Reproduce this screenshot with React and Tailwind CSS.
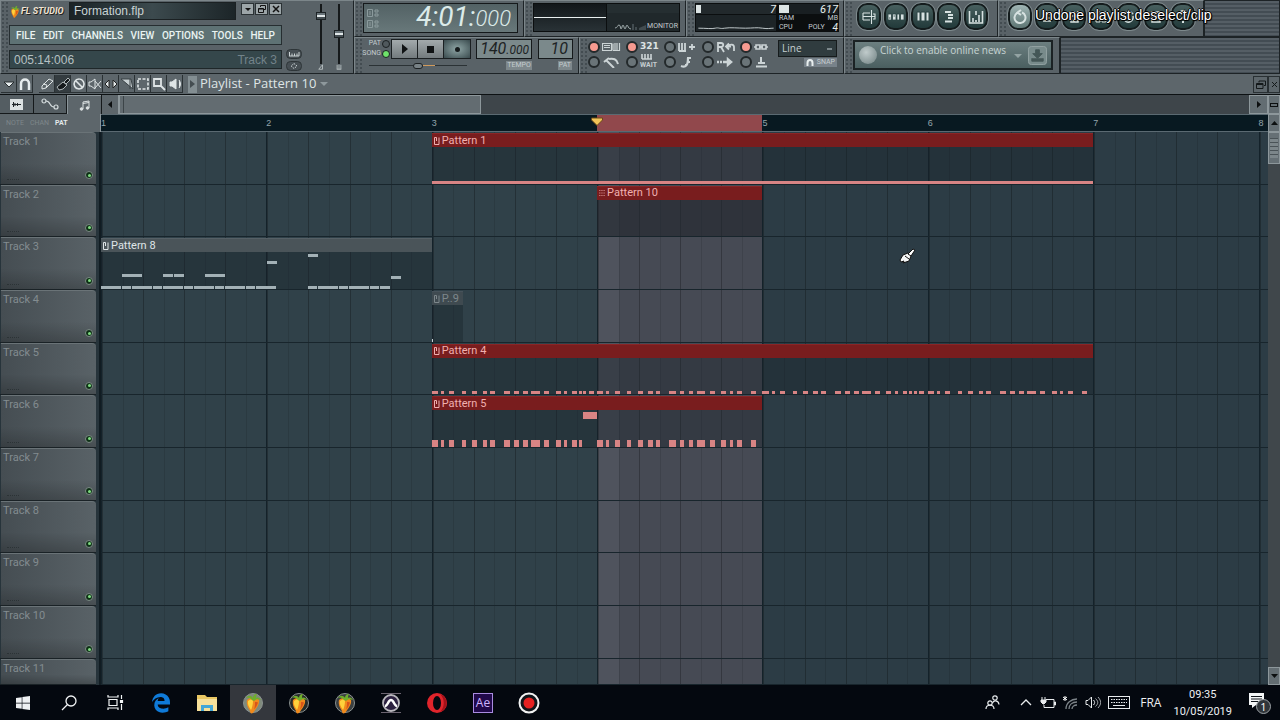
import React from "react";
import { FaEdgeLegacy, FaWindows } from "react-icons/fa";

// one bar of the timeline is 496 ticks, about 7 bars fit in the window
const BAR_TICKS = 496;
const BAR_WIDTH = 14.17;

const hits = [
  [0, 19], [28, 9], [53, 15], [91, 12], [122, 15], [153, 14], [176, 14], [217, 19],
  [248, 14], [275, 14], [299, 26], [338, 15], [372, 15], [398, 9], [421, 14],
];

function shift(list, bar) {
  return list.map(([start, length]) => ({ start: start + bar * BAR_TICKS, length }));
}

function steps(from, to) {
  const list = [];
  for (let start = from; start < to; start += 31) {
    list.push({ start, length: 29 });
  }
  return list;
}

const pattern4 = [
  ...shift([...hits, [441, 9], [455, 9], [471, 15]], 0),
  ...shift([...hits, [463, 14]], 1),
  ...shift([...hits, [441, 9], [455, 9], [471, 15]], 2),
  ...shift([...hits, [463, 14]], 3),
];

const pattern5 = [
  ...shift([...hits, [441, 10]], 0),
  ...shift([...hits, [463, 14]], 1),
];

const pattern8High = [
  { start: 63, length: 30, top: 58 },
  { start: 94, length: 30, top: 58 },
  { start: 187, length: 30, top: 58 },
  { start: 218, length: 30, top: 58 },
  { start: 311, length: 30, top: 58 },
  { start: 342, length: 30, top: 58 },
  { start: 497, length: 30, top: 24 },
  { start: 620, length: 30, top: 4 },
  { start: 869, length: 30, top: 64 },
];

const tracks = [
  { name: "Track 1", clips: [{ name: "Pattern 1", bar: 2, bars: 4, color: "red", notes: [{ start: 0, length: 1984 }] }] },
  { name: "Track 2", clips: [{ name: "Pattern 10", bar: 3, bars: 1, color: "red", steps: true, notes: [] }] },
  { name: "Track 3", clips: [{ name: "Pattern 8", bar: 0, bars: 2, color: "gray", notes: [...steps(0, 527), ...steps(620, 868), ...pattern8High] }] },
  { name: "Track 4", clips: [{ name: "P..9", bar: 2, bars: 0.19, color: "dim", notes: [{ start: 0, length: 3 }] }] },
  { name: "Track 5", clips: [{ name: "Pattern 4", bar: 2, bars: 4, color: "red", notes: pattern4 }] },
  { name: "Track 6", clips: [{ name: "Pattern 5", bar: 2, bars: 2, color: "red", tall: true, notes: [...pattern5, { start: 454, length: 42, top: 4 }] }] },
  { name: "Track 7", clips: [] },
  { name: "Track 8", clips: [] },
  { name: "Track 9", clips: [] },
  { name: "Track 10", clips: [] },
  { name: "Track 11", clips: [] },
];

const headColors = {
  red: "bg-[#791d1e] text-[#f0b0b0] border-t border-[#8a2526]",
  gray: "bg-[#4a5459] text-[#dfe5e7] border-t border-[#566066]",
  dim: "bg-[#3f4a50] text-[#7d878b] border-t border-[#46525a]",
};

const noteColors = {
  red: "bg-[#d88484]",
  gray: "bg-[#a3b1b6]",
  dim: "bg-[#c3ced2]",
};

function Clip({ clip }) {
  const total = clip.bars * BAR_TICKS;
  return (
    <div
      className="absolute inset-y-0 flex flex-col overflow-hidden pt-px"
      style={{ left: `${clip.bar * BAR_WIDTH}%`, width: `${clip.bars * BAR_WIDTH}%` }}
    >
      <div className={`flex h-[14px] shrink-0 items-center gap-[2px] pl-[2px] font-['Roboto'] text-[11px] leading-[12px] whitespace-nowrap ${headColors[clip.color]}`}>
        <svg className="h-2 w-[6px] shrink-0" viewBox="0 0 6 8" fill="none" stroke="currentColor">
          {clip.steps ? (
            <path d="M0 1.5h6M0 4h6M0 6.5h6" strokeDasharray="1.5 .7" opacity=".6" />
          ) : (
            <path d="M2.5 .5h-2v7h4.500V.5M2.500 .5v3.500" />
          )}
        </svg>
        <span>{clip.name}</span>
      </div>
      <div className={`relative flex-1 ${clip.steps ? "bg-[#1f252c]/60" : "bg-[#18222a]/40"}`}>
        {clip.notes.map((note, i) => (
          <div
            key={i}
            className={`absolute ${noteColors[clip.color]} ${clip.tall ? "h-[7px]" : "h-[3px]"} ${note.top === undefined ? "bottom-0" : ""}`}
            style={{
              left: `${(note.start / total) * 100}%`,
              width: `${(note.length / total) * 100}%`,
              top: note.top === undefined ? undefined : `${note.top}%`,
            }}
          />
        ))}
      </div>
    </div>
  );
}

function GridLines() {
  return (
    <div className="absolute inset-0 flex overflow-hidden">
      {[0, 1, 2, 3, 4, 5, 6, 7].map((bar) => (
        <div
          key={bar}
          className={`grid shrink-0 basis-[14.17%] grid-cols-8 border-l border-[#14222a] ${bar === 3 ? "bg-[#464a54]" : bar < 4 ? "bg-[#304149]" : "bg-[#2c3c45]"}`}
        >
          {[0, 1, 2, 3, 4, 5, 6, 7].map((step) => (
            <div
              key={step}
              className={`border-l ${step % 2 ? "border-black/10" : "border-black/25"} ${bar === 3 && step === 0 ? "bg-white/5" : ""}`}
            />
          ))}
        </div>
      ))}
    </div>
  );
}

function Grip() {
  return (
    <div className="w-2 shrink-0 self-stretch bg-[radial-gradient(#3a4347_35%,transparent_40%)] bg-[size:4px_4px] opacity-70" />
  );
}

const panel = "border border-t-[#7c868a] border-l-[#7c868a] border-r-[#1d2326] border-b-[#1d2326] bg-[#596267]";
const stripes = "bg-[repeating-linear-gradient(#555e65_0px,#555e65_2px,#434c53_2px,#434c53_4px)]";

function Fruit({ className, tone }) {
  return (
    <svg className={className} viewBox="0 0 20 22" aria-hidden="true">
      {tone && <circle cx="10" cy="11" r="9.500" fill={tone} stroke="#8b9190" strokeWidth="1" />}
      <path d="M4 8c3-3 9-3 12 0 1 4-3 9-6 13-2 1-3 0-3-2-2-3-4-7-3-11z" fill="#f08a1c" />
      <path d="M5 9c2-2 4-2 5 0 0 3-1 7-2 9-2-3-4-6-3-9z" fill="#ffd23c" />
      <path d="M9 8C7 5 4 5 3 6c2-3 5-3 7 0 0-3 2-4 4-4-1 2-1 3-1 4 2-1 4 0 5 2-3-1-5-1-7 1z" fill="#6fae2c" />
      <path d="M12 10c1 0 2 0 3 .5-1 3-2 5-4 7 1-3 1-5 1-7.500z" fill="#d9541a" />
    </svg>
  );
}

function WindowButton({ label, children }) {
  return (
    <button aria-label={label} className="flex h-3 w-[13px] items-center justify-center border border-[#2b3235] bg-[#9ca5a8] text-[#111]">
      <svg className="h-2 w-2" viewBox="0 0 8 8" fill="none" stroke="currentColor">{children}</svg>
    </button>
  );
}

function MainPanel() {
  return (
    <section className={`flex w-[354px] shrink-0 ${panel}`}>
      <Grip />
      <div className="flex w-[273px] flex-col gap-[5px] pt-px">
        <div className="flex h-[18px] items-center">
          <div className="flex w-[60px] shrink-0 items-center">
            <Fruit className="h-[17px] w-3 shrink-0" />
            <span className="font-['Roboto'] text-[9px] leading-4 font-bold whitespace-nowrap text-[#efe2d2] italic [text-shadow:1px_1px_0_#222]">FL STUDIO</span>
          </div>
          <div className="flex h-[18px] flex-1 items-center border border-[#1b2123] bg-gradient-to-r from-[#1a2326] via-[#3c4a4e] to-[#1c2528] pl-1 font-['Liberation_Sans'] text-[12px] text-[#c9d3d4]">Formation.flp</div>
          <div className="flex w-[46px] items-center justify-end gap-px self-start pt-px">
            <WindowButton label="Minimize"><path d="M1 3h6L4 6z" fill="currentColor" stroke="none" /></WindowButton>
            <WindowButton label="Restore"><path d="M2.500 2V.5h5v4H6M.5 3.500h5v4h-5zM.5 4h5" /></WindowButton>
            <WindowButton label="Close"><path d="M1 1l6 6M7 1L1 7" strokeWidth="1.500" /></WindowButton>
          </div>
        </div>
        <nav className="flex h-5 items-center justify-between border border-[#262e31] bg-[#5e7274] px-[6px] font-['Roboto'] text-[10px] font-medium text-[#eaf4f2]">
          {["FILE", "EDIT", "CHANNELS", "VIEW", "OPTIONS", "TOOLS", "HELP"].map((item) => (
            <button key={item}>{item}</button>
          ))}
        </nav>
        <div className="flex h-[19px] items-center justify-between border border-[#1f2729] bg-[#35474b] px-1 font-['Liberation_Sans'] text-[12px] text-[#b5c1c2]">
          <span>005:14:006</span>
          <span className="text-[#73838a]">Track 3</span>
        </div>
      </div>
      <div className="flex w-6 flex-col items-center justify-end gap-[2px] pb-[2px] text-[#c9d1d3]">
        <svg className="h-[10px] w-4" viewBox="0 0 16 10"><rect x=".5" y=".5" width="15" height="9" rx="4" fill="#464e53" stroke="#2e3538" /><path d="M3.500 3v4M6 4.500V7M8.500 4.500V7M11 4.500V7M13 3v4M3 7h10" stroke="currentColor" fill="none" /></svg>
        <svg className="h-[10px] w-4" viewBox="0 0 16 10"><rect x=".5" y=".5" width="15" height="9" rx="4" fill="#464e53" stroke="#2e3538" /><path d="M8 2.500l3 2.500-3 2.500L5 5z" stroke="currentColor" strokeDasharray="1.500 1" fill="none" /></svg>
      </div>
      <div className="flex flex-1 justify-center gap-[2px] pt-[3px]">
        <VolumeSlider label="Main volume" value={85} icon="M6 1v6H1z" />
        <VolumeSlider label="Main pitch" value={50} icon="M1.500 1v6M4 1v6M6.500 1v6M1 7h6" />
      </div>
    </section>
  );
}

function VolumeSlider({ label, value, icon }) {
  return (
    <div className="flex w-4 flex-col items-center">
      <input
        type="range"
        aria-label={label}
        defaultValue={value}
        className="h-[60px] w-4 appearance-none bg-[linear-gradient(90deg,transparent_7px,#15191b_7px,#15191b_9px,transparent_9px)] [direction:rtl] [writing-mode:vertical-lr] [&::-webkit-slider-thumb]:h-2 [&::-webkit-slider-thumb]:w-[10px] [&::-webkit-slider-thumb]:appearance-none [&::-webkit-slider-thumb]:border [&::-webkit-slider-thumb]:border-[#1c2225] [&::-webkit-slider-thumb]:bg-[linear-gradient(#69747a_2px,#dfe6e8_2px,#dfe6e8_4px,#444d52_4px)]"
      />
      <svg className="h-[6px] w-2" viewBox="0 0 8 8" fill="none" stroke="#c8d0d2"><path d={icon} /></svg>
    </div>
  );
}

const pixelLabel = "font-['Roboto'] text-[7px] leading-[9px] text-[#c4cccf]";

function TimePanel() {
  return (
    <section className={`flex w-[170px] ${panel}`}>
      <Grip />
      <div className="mt-[2px] mr-[5px] flex h-[30px] flex-1 items-center border border-[#15191b] bg-gradient-to-b from-[#536265] to-[#68787a] pl-[3px]">
        <svg className="h-5 w-3" viewBox="0 0 12 20" fill="none" stroke="#8b9a9c">
          <path d="M.5 1.500h5v7h-5zM2 4h2M2 6h2M8 2h3v2H8zM8 6h3v2H8zM.5 12.500h5v7h-5zM3 14v4M8 13h3v2H8zM8 17h3v2H8z" />
        </svg>
        <div className="flex flex-1 items-baseline justify-end pr-[6px] font-['Roboto'] text-[#dcebe9] italic">
          <span className="text-[28px] leading-7">4:01:</span>
          <span className="text-[22px] leading-7 font-light">000</span>
        </div>
      </div>
    </section>
  );
}

function MonitorPanel() {
  return (
    <section className={`flex w-[162px] ${panel}`}>
      <Grip />
      <div className="mt-[2px] mr-[5px] grid h-[29px] flex-1 grid-cols-2 border border-[#0b0e0f] bg-[#1f272a]">
        <div className="flex items-center border-r border-[#0b0e0f] bg-gradient-to-b from-[#12171a] to-[#293236]">
          <div className="h-px flex-1 bg-[#eaf0f0]" />
        </div>
        <div className="flex items-end justify-end border-t-[9px] border-[#252e31] bg-[#20282b]">
          <svg className="mb-px h-[6px] w-4" viewBox="0 0 16 6" fill="none" stroke="#9da8aa"><path d="M0 4c3 0 2-3 4-3s1 4 2 4 1-4 2-4 1 4 2 4 1-4 2-4 1 4 4 4" /></svg>
          <svg className="mb-px h-[6px] w-4" viewBox="0 0 16 6" fill="#424c50"><path d="M1 0h2v6H1zM4 3h2v3H4zM8 6V4l7-3v5z" /></svg>
          <span className={`${pixelLabel} pr-px`}>MONITOR</span>
        </div>
      </div>
    </section>
  );
}

function CpuPanel() {
  return (
    <section className={`flex flex-1 ${panel}`}>
      <Grip />
      <div className="mt-[2px] mr-1 flex h-[29px] flex-1 gap-[3px] border border-[#0b0e0f] bg-[#0b0e0f] font-['Roboto'] text-[11px] leading-[11px] text-[#e6eeee]">
        <div className="flex w-20 flex-col gap-px">
          <div className="flex h-[10px] items-center justify-between bg-[#22292c]">
            <div className="h-2 w-[5px] bg-[#dce4e4]" />
            <span className="italic">7</span>
          </div>
          <svg className="w-20 flex-1 bg-[#1d2427]" viewBox="0 0 80 17" fill="none" stroke="#c8d0d2"><path d="M0 14c8 0 14 1 18 0s4 1 10 0 14 0 22 0 12-1 18 0 8 0 12 0" /></svg>
        </div>
        <div className="flex flex-1 flex-col">
          <div className="flex h-[10px] items-center justify-between bg-[#191f22]">
            <div className="h-2 w-[10px] bg-[#dce4e4]" />
            <span className="italic">617</span>
          </div>
          <div className={`flex justify-between ${pixelLabel}`}><span>RAM</span><span>MB</span></div>
          <div className={`flex items-center justify-between ${pixelLabel}`}>
            <span>CPU</span>
            <span className="pl-2">POLY</span>
            <span className="text-[10px] text-[#e6eeee] italic">4</span>
          </div>
        </div>
      </div>
    </section>
  );
}

function TransportPanel() {
  return (
    <section className={`flex w-[226px] ${panel}`}>
      <Grip />
      <div className="flex flex-1 flex-col gap-[2px] pt-px">
        <div className="flex items-start">
          <div className="flex w-[27px] flex-col gap-px">
            <label className={`flex items-center justify-end gap-px ${pixelLabel}`}>PAT
              <input type="radio" name="mode" className="size-2 appearance-none rounded-full border border-[#1b2022] bg-[#50595d] checked:bg-[#6fe36a]" />
            </label>
            <label className={`flex items-center justify-end gap-px ${pixelLabel}`}>SONG
              <input type="radio" name="mode" defaultChecked className="size-2 shrink-0 appearance-none rounded-full border border-[#1b2022] bg-[#50595d] checked:bg-[#6fe36a]" />
            </label>
          </div>
          <div className="ml-px flex h-5 border border-[#1b2022]">
            <button aria-label="Play" className="flex w-[26px] items-center justify-center border-r border-[#1b2022] bg-gradient-to-b from-[#a3aaac] to-[#737b7e]">
              <svg className="h-[10px] w-2" viewBox="0 0 8 10"><path d="M1 0l6 5-6 5z" fill="#101314" /></svg>
            </button>
            <button aria-label="Stop" className="flex w-[26px] items-center justify-center border-r border-[#1b2022] bg-gradient-to-b from-[#a3aaac] to-[#737b7e]">
              <span className="size-[7px] bg-[#101314]" />
            </button>
            <button aria-label="Record" className="flex w-[26px] items-center justify-center bg-[radial-gradient(#8fa6a6,#394a4d)]">
              <span className="size-[5px] rounded-full bg-[#151b1c]" />
            </button>
          </div>
          <div className="ml-[5px] flex h-5 w-[56px] items-baseline justify-end border border-[#15191b] bg-[#7b898b] pr-[2px] font-['Roboto'] text-[#1d2324] italic">
            <span className="text-[16px] leading-[18px]">140</span><span className="text-[12px] leading-[18px]">.000</span>
          </div>
          <div className="ml-[6px] flex h-5 w-[35px] items-center justify-end border border-[#15191b] bg-[#7b898b] pr-1 font-['Roboto'] text-[16px] leading-[18px] text-[#1d2324] italic">10</div>
        </div>
        <div className="flex items-center">
          <input
            type="range"
            aria-label="Song position"
            defaultValue={50}
            className="ml-[6px] h-2 w-[98px] appearance-none bg-[linear-gradient(transparent_3px,#2b3235_3px,#2b3235_4px,transparent_4px)] [&::-webkit-slider-thumb]:h-[6px] [&::-webkit-slider-thumb]:w-[10px] [&::-webkit-slider-thumb]:appearance-none [&::-webkit-slider-thumb]:rounded-sm [&::-webkit-slider-thumb]:border [&::-webkit-slider-thumb]:border-[#1b2022] [&::-webkit-slider-thumb]:bg-[#788286]"
          />
          <span className="-ml-11 h-px w-3 bg-[#d09a5c]" />
          <span className={`ml-auto bg-[#7e888c] px-px ${pixelLabel}`}>TEMPO</span>
          <span className={`mr-[6px] ml-[26px] bg-[#7e888c] px-px ${pixelLabel}`}>PAT</span>
        </div>
      </div>
    </section>
  );
}

const options = [
  { label: "Typing keyboard", on: true, icon: <path d="M.5 2.500h9v7h-9zM2 4.500h6M2 6.500h6M11 2.500v7M13 2v8M15 2v8M17.500 2v8M11 9.500h7" strokeWidth="1.200" /> },
  { label: "Countdown", on: true, text: "321" },
  { label: "Blend recording", icon: <path d="M1 2v8M4 2v8M7 2v8M1 10h7M11 6h6M14 3v6" strokeWidth="1.800" /> },
  { label: "Loop recording", icon: <path d="M2 11V2h3c3 0 3 4 0 4H2M5 6l3 5M18 10V6c0-3-4-3-6-1M10 5.500h5M13 8.500L10 5.500 13 2.500" strokeWidth="1.800" /> },
  { label: "Step editing", on: true, icon: <path d="M0 6h2M2 4h4v4H2zM5 6h4M8 4h4v4H8zM12 6h2" strokeWidth="1.600" /> },
  { label: "Metronome", icon: <path d="M4 4l8 8M2 6l5-4M7 3c4-1 8 0 9 5" strokeWidth="2" /> },
  { label: "Wait for input", icon: <path d="M2 0v5M5 0v5M8 0v5M11 0v5M2 5h10" strokeWidth="1.600" />, small: "WAIT" },
  { label: "Multilink", icon: <path d="M3 10c5 2 7-1 7-8M9 2h4M12 6h-2M9 9H7" strokeWidth="2.200" /> },
  { label: "Auto scroll", icon: <path d="M1 6h2M4 6h2M7 6h5M12 3.500l3 2.500-3 2.500z" strokeWidth="2.500" /> },
  { label: "Note group", icon: <path d="M7 1v7M4 7h7M2 10.500h11" strokeWidth="2" /> },
];

function OptionsPanel() {
  return (
    <section className={`flex flex-1 ${panel}`}>
      <Grip />
      <div className="grid w-[190px] grid-cols-5 content-start pt-px">
        {options.map((option) => (
          <label key={option.label} className="flex h-[15px] items-center gap-[2px]">
            <input
              type="checkbox"
              aria-label={option.label}
              defaultChecked={option.on}
              className="size-3 shrink-0 appearance-none rounded-full border-2 border-[#23292b] bg-[#6a7478] checked:bg-[#f79a90]"
            />
            {option.text ? (
              <span className="font-['DejaVu_Sans'] text-[9px] font-bold text-[#dde3e4]">{option.text}</span>
            ) : (
              <span className="flex flex-col items-start">
                <svg className={option.small ? "h-[7px] w-5" : "h-3 w-5"} viewBox={option.small ? "0 0 20 7" : "0 0 20 12"} fill="none" stroke="#ccd4d6">{option.icon}</svg>
                {option.small && <span className={`${pixelLabel} leading-[7px] font-bold`}>{option.small}</span>}
              </span>
            )}
          </label>
        ))}
      </div>
      <div className="flex flex-1 flex-col items-end gap-px pt-[2px] pr-[6px]">
        <select aria-label="Snap" className="h-[17px] w-[59px] appearance-none border border-[#161b1c] bg-[#303c3f] bg-[linear-gradient(#7a868a,#7a868a)] bg-[size:5px_2px] bg-[position:right_4px_center] bg-no-repeat pl-[3px] font-['Open_Sans'] text-[10px] leading-[15px] text-[#c6d0d1]">
          <option>Line</option>
        </select>
        <span className={`flex items-center gap-[3px] bg-[#78828a] px-[2px] ${pixelLabel}`}>
          <svg className="h-[7px] w-2" viewBox="0 0 8 7" fill="none" stroke="#e8eeee" strokeWidth="2"><path d="M1.500 7V4c0-4 5-4 5 0v3" /></svg>
          SNAP
        </span>
      </div>
    </section>
  );
}

const windowIcons = [
  ["Playlist", <path d="M2 4h7M2 7.500h12M2 11h7M2 4v7M10.500 1v14M12 5h2v5h-2" strokeWidth="1.100" />],
  ["Step sequencer", <path d="M0 5h3.500v6H0zM4.500 5H8v6H4.500zM9 5h2.500v6H9zM12.500 5H16v6h-3.500zM1 9h1.500M5.500 7H7" fill="#d7e2e1" stroke="#2c4444" strokeWidth=".8" />],
  ["Piano roll", <path d="M2 3h3v9H2zM6 3h4v9H6zM11 3h3v9h-3zM5.500 3v5M10.500 3v5" fill="#d7e2e1" stroke="#2c4444" />],
  ["Browser", <path d="M4 3h6M7 6h5M7 9h5M4 12.500h7" strokeWidth="1.800" />],
  ["Mixer", <path d="M1.500 2v12h13V2M5 9v4M8 2v4M8 11v2M11 6v7" strokeWidth="1.600" />],
];

const toolIcons = [
  ["Undo", <path d="M5 4a5.500 5.500 0 1 0 5-.5M9 1L5.500 3.500 9 6" strokeWidth="2" />],
  ["Save", <path d="M3 5h10M4 9h8M4 12h8" strokeWidth="1.500" />],
  ["Render", <path d="M3 3h2M7 3h2M11 3h2M5 7h7v6H5zM8 10v3" strokeWidth="1.500" />],
  ["Scripts", <path d="M3 3h4v4H3zM9 3h4v4H9zM3 10h4v3H3zM9 10h4v3H9z" />],
  ["Edit", <path d="M3 9a5 5 0 0 1 9-4M12 7a5 5 0 0 1-8 5" strokeWidth="1.500" />],
  ["Record", <path d="M4 3h8v10H4zM6 6h4M6 9h4" strokeWidth="1.500" />],
  ["Help", <path d="M5 5c0-4 6-4 6 0 0 2-3 2-3 5M8 12v2" strokeWidth="2" />],
];

function RoundButton({ label, children, lit }) {
  return (
    <button
      aria-label={label}
      className={`flex h-[27px] w-6 shrink-0 items-center justify-center rounded-[10px] border-2 border-[#141c1d] outline outline-[#7d898c] ${lit ? "bg-gradient-to-b from-[#a0b5b4] to-[#5e7674]" : "bg-gradient-to-b from-[#48605f] to-[#223a3a]"}`}
    >
      <svg className="size-4 shrink-0" viewBox="0 0 16 16" fill="none" stroke="#d7e2e1">{children}</svg>
    </button>
  );
}

function RightPanels() {
  return (
    <div className="flex min-w-0 flex-1 flex-col">
      <div className="flex h-[37px]">
        <section className={`flex w-[154px] ${panel}`}>
          <Grip />
          <div className="flex flex-1 justify-between pt-[2px] pr-[9px] pl-1">
            {windowIcons.map(([label, icon]) => <RoundButton key={label} label={label}>{icon}</RoundButton>)}
          </div>
        </section>
        <section className={`relative flex w-[206px] ${panel}`}>
          <Grip />
          <div className="flex flex-1 justify-between pt-[2px] pr-2 pl-px">
            {toolIcons.map(([label, icon]) => <RoundButton key={label} label={label} lit={label === "Undo"}>{icon}</RoundButton>)}
          </div>
          <p className="absolute top-1 left-9 font-['Liberation_Sans'] text-[14px] leading-5 whitespace-nowrap text-white [text-shadow:1px_0_0_#000,-1px_0_0_#000,0_1px_0_#000,0_-1px_0_#000,1px_1px_1px_#000]">
            Undone playlist deselect/clip
          </p>
        </section>
        <div className={`flex-1 border border-[#1d2326] ${stripes}`} />
      </div>
      <div className="flex h-[37px]">
        <section className={`flex w-[216px] ${panel}`}>
          <Grip />
          <button className="mt-[2px] mr-[6px] flex h-[30px] flex-1 items-center border-2 border-[#1b2224] bg-gradient-to-b from-[#6c7f80] to-[#4a5f60] px-1 font-['Open_Sans'] text-[10px] text-[#c7d4d3]">
            <span className="size-[18px] shrink-0 rounded-full bg-[radial-gradient(circle_at_40%_35%,#c0cbcb,#6f8081)]" />
            <span className="-mt-[9px] ml-[3px] whitespace-nowrap">Click to enable online news</span>
            <svg className="ml-auto h-2 w-2" viewBox="0 0 8 8"><path d="M0 3h8L4 7z" fill="#93a3a3" /></svg>
            <svg className="ml-[6px] size-[19px] shrink-0" viewBox="0 0 20 20"><rect x=".5" y=".5" width="19" height="19" rx="3" fill="#788b8b" stroke="#93a3a3" /><path d="M8 4h4v4h3l-5 5-5-5h3zM4 13v3h12v-3" fill="#445757" stroke="#445757" /></svg>
          </button>
        </section>
        <div className={`flex-1 border border-[#1d2326] ${stripes}`} />
      </div>
    </div>
  );
}

const editTools = [
  ["Draw", <path d="M2 9l7-7 4 2-7 7-4 1zM6 11l1-3-4-1" fill="#5b6468" />],
  ["Paint", <path d="M1 10l6-5 4 3-4 4-4 1zM8 5l4-4 2 2-4 4z" fill="#15191b" stroke="#aeb6b8" />],
  ["Delete", <path d="M7 2a5 5 0 1 0 .1 0M4 4l6 6" strokeWidth="1.600" />],
  ["Mute", <path d="M1 5h2l4-3v10L3 9H1zM7 4l6 7M13 4l-6 7" />],
  ["Slip", <path d="M5 3v8L1 7zM9 3v8l4-4z" fill="#e4eaeb" stroke="#222" />],
  ["Slice", <path d="M1 2h10l2 10zM10 2v10" fill="#c8d0d2" stroke="#394145" />],
  ["Select", <path d="M2 2h10v10H2z" strokeDasharray="3 1.500" strokeWidth="1.600" />],
  ["Zoom", <path d="M2 2h7v7H2zM9 9l4 4" strokeWidth="1.800" />],
  ["Playback", <path d="M2 5h2l4-3v10L4 9H2zM11 3c2 3 2 5 0 8" fill="#dfe5e6" />],
];

const toolButton = "flex h-[18px] w-4 items-center justify-center border-r border-b border-[#2a3134]";

function PlaylistTitle() {
  return (
    <header className="flex h-[21px] shrink-0 items-center border-b border-[#0d1113] bg-[#5d666b] pl-px text-[#dfe5e6]">
      <button aria-label="Playlist options" className={toolButton}>
        <svg className="h-2 w-3" viewBox="0 0 12 8"><path d="M1 2h10L6 7z" fill="#e7edee" stroke="#262c2e" /></svg>
      </button>
      <button aria-label="Snap to grid" className={toolButton}>
        <svg className="size-3" viewBox="0 0 12 12" fill="none" stroke="#e7edee" strokeWidth="2.500"><path d="M2 12V6c0-6 8-6 8 0v6" /></svg>
      </button>
      <div className="ml-[6px] flex">
        {editTools.map(([label, icon]) => (
          <button key={label} aria-label={label} className={`${toolButton} ${label === "Paint" ? "bg-[#343c40]" : ""}`}>
            <svg className="size-[14px]" viewBox="0 0 14 14" fill="none" stroke="#dfe5e6">{icon}</svg>
          </button>
        ))}
      </div>
      <div className="ml-[5px] flex h-[17px] w-[9px] items-center justify-center bg-[#838e92]">
        <svg className="h-2 w-[5px]" viewBox="0 0 5 8"><path d="M0 0l5 4-5 4z" fill="#444d51" /></svg>
      </div>
      <h1 className="ml-[3px] font-['Open_Sans'] text-[13px] font-medium">Playlist - Pattern 10</h1>
      <svg className="ml-1 h-[5px] w-2" viewBox="0 0 8 5"><path d="M0 0h8L4 4z" fill="#8e989c" /></svg>
      <button aria-label="Restore" className="ml-auto flex h-[17px] w-[15px] items-center justify-center border border-[#293033]">
        <svg className="h-[9px] w-[10px]" viewBox="0 0 10 9" fill="none" stroke="#14191a"><path d="M3 2.500V1h6.500v4.500H8M.5 3.500h6.500v5H.500zM.5 4.500H7" /></svg>
      </button>
      <button aria-label="Close" className="flex h-[17px] w-3 items-center justify-center border border-[#293033]">
        <svg className="size-[7px]" viewBox="0 0 7 7" stroke="#14191a"><path d="M1 1l5 5M6 1L1 6" /></svg>
      </button>
    </header>
  );
}

const arrowButton = "flex items-center justify-center border border-[#8d979b] bg-[#636d72]";

function ScrollRow() {
  return (
    <div className="flex h-[19px] shrink-0 bg-[#5d666b]">
      <div className="flex w-[101px] shrink-0">
        <button aria-label="Audio clips" className="flex flex-1 items-center justify-center border-r border-b border-[#15191b] bg-[#545d62]">
          <svg className="h-[11px] w-[13px]" viewBox="0 0 13 11"><path d="M0 0h13v11H0z" fill="#dbe1e2" /><path d="M2 5.500h9M3.500 3v5M5 4v3M7.500 4v3" stroke="#20272a" /></svg>
        </button>
        <button aria-label="Automation clips" className="flex flex-1 items-center justify-center border-r border-b border-[#15191b] bg-[#545d62]">
          <svg className="h-3 w-[18px]" viewBox="0 0 18 12" fill="none" stroke="#d3dadc" strokeWidth="1.200"><circle cx="3" cy="3" r="2" /><circle cx="15" cy="9" r="2" /><path d="M5 3c5 0 3 6 8 6" /></svg>
        </button>
        <button aria-label="Pattern clips" className="flex flex-1 items-center justify-center border-t border-l border-[#8b959a]">
          <svg className="h-[11px] w-[11px]" viewBox="0 0 11 11" fill="#dbe1e2" stroke="#dbe1e2"><path d="M4 9V2l6-1v7M4 3.500l6-1" fill="none" /><circle cx="2.500" cy="9" r="1.300" /><circle cx="8.500" cy="8" r="1.300" /></svg>
        </button>
      </div>
      <button aria-label="Scroll left" className="flex w-[18px] items-center justify-center border-r border-l border-r-[#8d979b] border-l-[#15191b]">
        <svg className="h-[7px] w-1" viewBox="0 0 4 7"><path d="M4 0v7L0 3.500z" fill="#0c0f10" /></svg>
      </button>
      <div className="flex flex-1 bg-[#3e454a]">
        <div className="w-[32%] border border-[#8d979b] bg-[#636c71] pl-[3px]">
          <div className="h-full w-px bg-[#3c4448]" />
        </div>
      </div>
      <button aria-label="Scroll right" className={`w-[19px] ${arrowButton}`}>
        <svg className="h-[7px] w-1" viewBox="0 0 4 7"><path d="M0 0v7l4-3.500z" fill="#0c0f10" /></svg>
      </button>
      <button aria-label="Zoom out" className={`w-3 ${arrowButton}`}>
        <span className="h-1 w-2 border border-[#0c0f10]" />
      </button>
    </div>
  );
}

function Ruler() {
  return (
    <div className="flex h-[18px] shrink-0">
      <div className={`flex w-[101px] shrink-0 items-center gap-[6px] border-r border-[#8b959a] bg-[#5d666b] pl-[6px] ${pixelLabel}`}>
        <button className="text-[#7d868a]">NOTE</button>
        <button className="text-[#7d868a]">CHAN</button>
        <button className="font-bold text-[#e3e9ea]">PAT</button>
      </div>
      <div className="relative flex flex-1 overflow-hidden border-y border-[#5b6a72] bg-[#081921]">
        {[1, 2, 3, 4, 5, 6, 7, 8].map((bar) => (
          <div
            key={bar}
            className={`flex shrink-0 basis-[14.17%] items-center font-['Liberation_Sans'] text-[9px] leading-none text-[#94a5ac] ${bar === 4 ? "bg-[#91484c]" : ""}`}
          >
            {bar === 4 ? (
              <svg className="mb-1 -ml-[6px] h-[9px] w-3" viewBox="0 0 12 9"><path d="M.5 1h11v2L6 8.500.5 3z" fill="#f2c458" stroke="#6b4a19" /></svg>
            ) : (
              bar
            )}
          </div>
        ))}
      </div>
      <button aria-label="Scroll up" className={`w-3 ${arrowButton}`}>
        <svg className="h-1 w-[7px]" viewBox="0 0 7 4"><path d="M0 4h7L3.500 0z" fill="#0c0f10" /></svg>
      </button>
    </div>
  );
}

function TrackHead({ track, last }) {
  return (
    <div className="h-full overflow-hidden rounded-tr-[4px] border-t border-[#6a7377] bg-gradient-to-r from-[#454d52] to-[#596267]">
      <div className="flex h-full flex-col justify-between bg-gradient-to-b from-transparent from-60% to-black/20">
        <span className="pl-[2px] font-['Roboto'] text-[11px] leading-[18px] text-[#838c90]">{track.name}</span>
        {!last && (
          <div className="flex items-center justify-between pr-[3px] pb-1 pl-[6px]">
            <span className="mt-2 w-3 border-b border-dotted border-[#2c3336]" />
            <button aria-label={`Mute ${track.name}`} className="flex size-2 items-center justify-center rounded-full border border-[#7d8a86] bg-[#0d3015]">
              <span className="size-[3px] rounded-full bg-[#7fdc80]" />
            </button>
          </div>
        )}
      </div>
    </div>
  );
}

function Tracks() {
  return (
    <div className="flex min-h-0 flex-1">
      <div className="grid w-[101px] shrink-0 grid-rows-[repeat(10,2fr)_1fr] border-r-2 border-[#111c22] bg-[#27343b] pr-[3px]">
        {tracks.map((track, i) => (
          <div key={track.name} className="min-h-0 border-b border-[#1a2226] pl-px">
            <TrackHead track={track} last={i === 10} />
          </div>
        ))}
      </div>
      <main className="relative min-w-0 flex-1 overflow-hidden">
        <GridLines />
        <div className="relative grid h-full grid-rows-[repeat(10,2fr)_1fr]">
          {tracks.map((track) => (
            <div key={track.name} className="relative min-h-0 border-b border-[#18252c]">
              {track.clips.map((clip) => <Clip key={clip.name} clip={clip} />)}
            </div>
          ))}
        </div>
        <svg className="absolute top-[21%] left-[68.4%] h-4 w-[18px]" viewBox="0 0 18 16">
          <path d="M1 12l3-5 5-2 3 3-2 5-6 2 1-2-3 1z" fill="#f4f6f6" stroke="#111" />
          <path d="M9 6l5-5 2 1-4 6z" fill="#fff" stroke="#111" />
          <path d="M6 8l4 3" stroke="#111" />
        </svg>
      </main>
      <div className="flex w-3 shrink-0 flex-col justify-between bg-[#40474b]">
        <div className="h-8 border border-[#8d979b] bg-[#667075] px-px py-[5px]">
          <div className="h-full bg-[repeating-linear-gradient(#4a5357_0px,#4a5357_1px,#7c868a_1px,#7c868a_4px)]" />
        </div>
        <button aria-label="Scroll down" className={`h-[18px] ${arrowButton}`}>
          <svg className="h-1 w-[7px]" viewBox="0 0 7 4"><path d="M0 0h7L3.500 4z" fill="#0c0f10" /></svg>
        </button>
      </div>
    </div>
  );
}

function TaskButton({ label, active, children }) {
  return (
    <button aria-label={label} className={`flex w-[46px] items-center justify-center ${active ? "bg-[#34373d]" : ""}`}>
      {children}
    </button>
  );
}

function Taskbar() {
  return (
    <footer className="flex h-[35px] shrink-0 justify-between bg-[#04080f] font-['Open_Sans'] text-[12px] text-[#eef0f2]">
      <div className="flex">
        <TaskButton label="Start"><FaWindows className="size-4" /></TaskButton>
        <TaskButton label="Search">
          <svg className="size-4" viewBox="0 0 16 16" fill="none" stroke="#f2f4f5" strokeWidth="1.300"><circle cx="10" cy="6" r="5" /><path d="M6.500 9.500L1 15" /></svg>
        </TaskButton>
        <TaskButton label="Task view">
          <svg className="h-[15px] w-[17px]" viewBox="0 0 17 15" fill="none" stroke="#f2f4f5" strokeWidth="1.200"><path d="M2 4.500h8v6H2zM1 0v2h10V0M1 15v-2h10v2M14.500 0v4M14.500 9v6" /><path d="M13.500 5.500h2v2h-2z" fill="#f2f4f5" /></svg>
        </TaskButton>
        <TaskButton label="Edge"><FaEdgeLegacy className="size-5 text-[#0f7ad8]" /></TaskButton>
        <TaskButton label="File Explorer">
          <svg className="h-[18px] w-5" viewBox="0 0 20 18"><path d="M0 1h8l2 2h10v14H0z" fill="#e9c763" /><path d="M0 5h20v12H0z" fill="#f7e09a" /><path d="M4 17v-6h12v6h-3v-3H7v3z" fill="#43a6d6" /></svg>
        </TaskButton>
        <TaskButton label="FL Studio" active><Fruit className="h-[22px] w-5" tone="#7f8a7c" /></TaskButton>
        <TaskButton label="FL Studio 12"><Fruit className="h-[22px] w-5" tone="#262b29" /></TaskButton>
        <TaskButton label="FL Studio 20"><Fruit className="h-[22px] w-5" tone="#3a3e40" /></TaskButton>
        <TaskButton label="Pro Tools">
          <svg className="h-[22px] w-5" viewBox="0 0 20 22" fill="none"><path d="M0 1.500h20M0 20.500h20" stroke="#6b6470" /><circle cx="10" cy="11" r="8" fill="#2c2140" stroke="#b9b7bd" strokeWidth="1.800" /><path d="M4 14c3 0 3-6 6-6s3 6 6 6" stroke="#fff" strokeWidth="2.500" /></svg>
        </TaskButton>
        <TaskButton label="Opera">
          <svg className="size-5" viewBox="0 0 20 20"><circle cx="10" cy="10" r="10" fill="#e0242b" /><path d="M13 1c9 3 9 15 0 18 5-5 5-13 0-18z" fill="#a4121a" /><ellipse cx="10" cy="10" rx="4" ry="7" fill="#04080f" /></svg>
        </TaskButton>
        <TaskButton label="After Effects">
          <span className="flex size-5 items-center justify-center border border-[#a98be0] bg-[#21094a] text-[12px] leading-none text-[#cdb5ff]">Ae</span>
        </TaskButton>
        <TaskButton label="Recorder">
          <svg className="size-[22px]" viewBox="0 0 22 22"><circle cx="11" cy="11" r="9.500" fill="#11151a" stroke="#f2f2f2" strokeWidth="2" /><circle cx="11" cy="11" r="5.500" fill="#e52020" /></svg>
        </TaskButton>
      </div>
      <div className="flex items-center">
        <button aria-label="People" className="mr-5">
          <svg className="size-[15px]" viewBox="0 0 15 15" fill="none" stroke="#e9ecee" strokeWidth="1.200"><circle cx="10" cy="3" r="2.200" /><path d="M7.500 8c1-3 6-3 6.500 1.500" /><circle cx="5" cy="8" r="2.200" /><path d="M1 14c0-5 8-5 8 0" /></svg>
        </button>
        <button aria-label="Hidden icons" className="mr-2">
          <svg className="h-[7px] w-3" viewBox="0 0 12 7" fill="none" stroke="#e9ecee" strokeWidth="1.300"><path d="M1 6l5-5 5 5" /></svg>
        </button>
        <svg className="mr-[7px] h-3 w-4" viewBox="0 0 16 12" fill="none" stroke="#e9ecee"><path d="M6 2.500h8v8H4V8M14.500 5v3h1V5z" /><path d="M2 0v3M5 0v3M1 3h5v2L4 7H3L1 5z" fill="#e9ecee" /></svg>
        <svg className="mr-[7px] h-[14px] w-[15px]" viewBox="0 0 15 14" fill="none" stroke="#7d8489"><path d="M3 13C3 7 8 3 14 3M6 13c0-4 3-7 8-7M9 13c0-2 2-4 5-4" strokeWidth="1.300" /><path d="M2 0v5M0 1l4 3M4 1L0 4" stroke="#fff" /></svg>
        <svg className="mr-[7px] h-[13px] w-4" viewBox="0 0 16 13" fill="none" stroke="#e9ecee"><path d="M1 4.500h2l3.500-3.500v11L3 8.500H1zM8.500 4c1.500 2 1.500 3 0 5" /><path d="M10.500 2.500c3 3 3 5 0 8M13 1c3.500 4 3.500 7 0 11" opacity=".7" /></svg>
        <svg className="mr-[10px] h-[13px] w-[22px]" viewBox="0 0 22 13" fill="none" stroke="#e9ecee"><rect x=".5" y=".5" width="21" height="12" /><path d="M3 3.500h16M3 6.500h16" strokeDasharray="1.500 1" /><path d="M5 9.500h12" /></svg>
        <span className="mr-3">FRA</span>
        <div className="flex flex-col items-center font-['Roboto'] text-[11px] leading-[17px]">
          <span>09:35</span>
          <span>10/05/2019</span>
        </div>
        <button aria-label="Notifications" className="mr-[9px] ml-4">
          <svg className="h-[23px] w-[23px]" viewBox="0 0 23 23"><path d="M1 2h15v12H8l-4 3v-3H1z" fill="#f4f6f7" /><path d="M3 5.500h11M3 8h11M3 10.500h7" stroke="#10151b" /><circle cx="15.500" cy="15.500" r="7" fill="#30353a" stroke="#9da2a6" /><text x="15.500" y="19.500" textAnchor="middle" fontSize="11" fontFamily="Open Sans" fill="#fff">1</text></svg>
        </button>
      </div>
    </footer>
  );
}

function App() {
  return (
    <div className="flex h-screen flex-col overflow-hidden bg-[#2c3a41]">
      <div className="flex h-[74px] shrink-0 bg-[#596267]">
        <MainPanel />
        <div className="flex w-[490px] shrink-0 flex-col">
          <div className="flex h-[37px]">
            <TimePanel />
            <MonitorPanel />
            <CpuPanel />
          </div>
          <div className="flex h-[37px]">
            <TransportPanel />
            <OptionsPanel />
          </div>
        </div>
        <RightPanels />
      </div>
      <PlaylistTitle />
      <ScrollRow />
      <Ruler />
      <Tracks />
      <Taskbar />
    </div>
  );
}

export default App;
